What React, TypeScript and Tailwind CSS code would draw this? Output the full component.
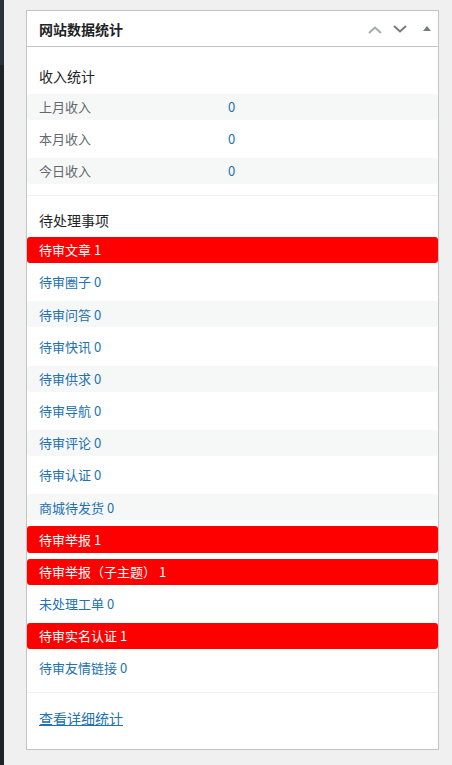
import React from "react";

const font = { fontFamily: '"Noto Sans CJK SC", "Noto Sans", sans-serif' };

type Item = { label: string; count: number; red?: boolean };

const items: Item[] = [
  { label: "待审文章", count: 1, red: true },
  { label: "待审圈子", count: 0 },
  { label: "待审问答", count: 0 },
  { label: "待审快讯", count: 0 },
  { label: "待审供求", count: 0 },
  { label: "待审导航", count: 0 },
  { label: "待审评论", count: 0 },
  { label: "待审认证", count: 0 },
  { label: "商城待发货", count: 0 },
  { label: "待审举报", count: 1, red: true },
  { label: "待审举报（子主题）", count: 1, red: true },
  { label: "未处理工单", count: 0 },
  { label: "待审实名认证", count: 1, red: true },
  { label: "待审友情链接", count: 0 },
];

const stats = [
  { label: "上月收入", value: "0" },
  { label: "本月收入", value: "0" },
  { label: "今日收入", value: "0" },
];

export default function App() {
  return (
    <div className="flex min-h-[765px] bg-[#f0f0f1]" style={font}>
      <div className="flex w-[4px] flex-col">
        <div className="h-[65px] bg-[#2c3338]" />
        <div className="flex-1 bg-[#1d2327]" />
      </div>
      <div className="flex-1 pl-[22px] pr-[13px] pt-[10px]">
        <div className="border border-[#c3c4c7] bg-white">
          <div className="flex h-[36px] items-center border-b border-[#c3c4c7] pl-[12px] pr-[7px]">
            <h2 className="text-[14px] font-semibold leading-[20px] text-[#1d2327]">网站数据统计</h2>
            <div className="ml-auto flex items-center">
              <svg width="14" height="8" viewBox="0 0 14 8" className="mt-[2px]">
                <path d="M1 7 L7 1.5 L13 7" fill="none" stroke="#a7aaad" strokeWidth="2" />
              </svg>
              <svg width="14" height="8" viewBox="0 0 14 8" className="ml-[11px]">
                <path d="M1 1 L7 6.5 L13 1" fill="none" stroke="#787c82" strokeWidth="2" />
              </svg>
              <svg width="8" height="5" viewBox="0 0 8 5" className="ml-[16px]">
                <polygon points="0,5 4,0 8,5" fill="#787c82" />
              </svg>
            </div>
          </div>

          <div className="pt-[19px] pb-[11px]">
            <h3 className="mb-[8px] px-[12px] text-[14px] leading-[20px] text-[#1d2327]">收入统计</h3>
            <div className="flex flex-col gap-[6px]">
              {stats.map((s, i) => (
                <div
                  key={s.label}
                  className={`flex h-[26px] items-center rounded-[3px] text-[13px] ${i % 2 === 0 ? "bg-[#f6f7f7]" : ""}`}
                >
                  <span className="w-[201px] pl-[12px] text-[#646970]">{s.label}</span>
                  <span className="text-[#2271b1]">{s.value}</span>
                </div>
              ))}
            </div>
          </div>

          <div className="border-t border-[#f0f0f1] pt-[14px] pb-[11px]">
            <h3 className="mb-[7px] px-[12px] text-[14px] leading-[20px] text-[#1d2327]">待处理事项</h3>
            <div className="flex flex-col gap-[6px]">
              {items.map((it, i) => (
                <div
                  key={it.label}
                  className={`flex h-[26.17px] items-center rounded-[3px] pl-[12px] text-[13px] ${
                    it.red ? "bg-[#ff0000] text-white" : i % 2 === 0 ? "bg-[#f6f7f7] text-[#2271b1]" : "text-[#2271b1]"
                  }`}
                >
                  {it.label} {it.count}
                </div>
              ))}
            </div>
          </div>

          <div className="border-t border-[#f0f0f1] px-[12px] pt-[15px] pb-[21px] text-[14px] leading-[20px]">
            <a href="#" className="text-[#2271b1] underline">
              查看详细统计
            </a>
          </div>
        </div>
      </div>
    </div>
  );
}
